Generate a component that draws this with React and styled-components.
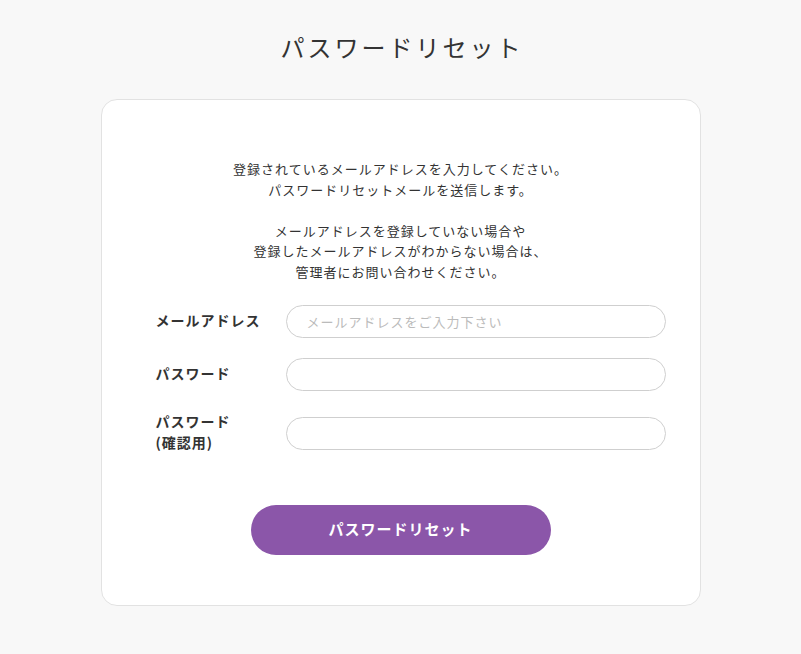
import styled, { createGlobalStyle } from "styled-components";

const GlobalStyle = createGlobalStyle`
  body {
    margin: 0;
    background: #f8f8f8;
    font-family: "Noto Sans CJK JP", "Noto Sans", sans-serif;
    color: #333;
  }
`

const Page = styled.div`
  display: flex;
  flex-direction: column;
  align-items: center;
  padding-top: 32px;
`

const Title = styled.h1`
  margin: 0 0 37px;
  font-size: 24px;
  font-weight: 400;
  line-height: 30px;
  letter-spacing: 0.125em;
  text-indent: 0.125em;
  color: #333;
`

const Card = styled.div`
  box-sizing: border-box;
  width: 600px;
  background: #fff;
  border: 1px solid #e2e2e2;
  border-radius: 16px;
  padding: 59px 0 50px;
  display: flex;
  flex-direction: column;
  align-items: center;
`

const Lead = styled.p`
  margin: 0 0 23px;
  font-size: 13px;
  line-height: 20.5px;
  letter-spacing: 1px;
  text-align: center;
  color: #333;
`

const Form = styled.div`
  align-self: stretch;
  margin: 0 33px 0 54px;
  display: flex;
  flex-direction: column;
  gap: 20px;
`

const Row = styled.div`
  display: grid;
  grid-template-columns: 130px 380px;
  align-items: center;
`

const Label = styled.label`
  font-size: 14px;
  font-weight: 700;
  line-height: 21px;
  padding-bottom: 2px;
  letter-spacing: 1px;
  color: #333;
`

const Input = styled.input`
  box-sizing: border-box;
  width: 380px;
  height: 33px;
  border: 1px solid #cfcfcf;
  border-radius: 17px;
  padding: 0 20px;
  font-family: inherit;
  font-size: 13px;
  letter-spacing: 1px;
  color: #333;
  outline: none;
  background: #fff;

  &::placeholder {
    color: #bbb;
  }
`

const Button = styled.button`
  margin-top: 50px;
  width: 300px;
  height: 50px;
  padding: 0 0 4px;
  border: none;
  border-radius: 25px;
  background: #8b56a9;
  color: #fff;
  font-family: inherit;
  font-size: 15px;
  font-weight: 700;
  letter-spacing: 1px;
  cursor: pointer;
`

const fields = [
  { label: "メールアドレス", type: "email", placeholder: "メールアドレスをご入力下さい" },
  { label: "パスワード", type: "password" },
  { label: <>パスワード<br />(確認用)</>, type: "password" },
];

function App() {
  return (
    <Page>
      <GlobalStyle />
      <Title>パスワードリセット</Title>
      <Card>
        <Lead>
          登録されているメールアドレスを入力してください。<br />
          パスワードリセットメールを送信します。<br />
          <br />
          メールアドレスを登録していない場合や<br />
          登録したメールアドレスがわからない場合は、<br />
          管理者にお問い合わせください。
        </Lead>
        <Form>
          {fields.map((f, i) => (
            <Row key={i}>
              <Label>{f.label}</Label>
              <Input type={f.type} placeholder={f.placeholder} />
            </Row>
          ))}
        </Form>
        <Button>パスワードリセット</Button>
      </Card>
    </Page>
  );
}

export default App;
